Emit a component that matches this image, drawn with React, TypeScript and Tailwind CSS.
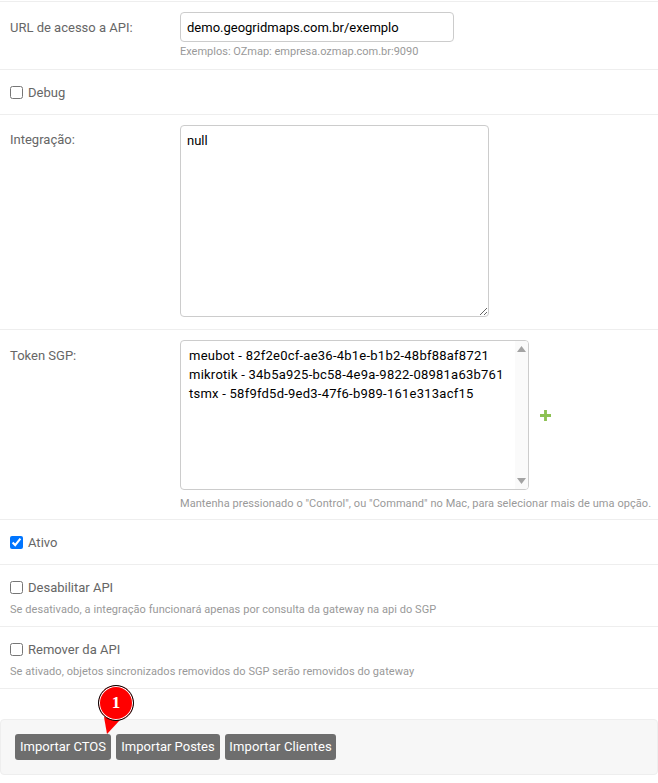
const tokens = [
  'meubot - 82f2e0cf-ae36-4b1e-b1b2-48bf88af8721',
  'mikrotik - 34b5a925-bc58-4e9a-9822-08981a63b761',
  'tsmx - 58f9fd5d-9ed3-47f6-b989-161e313acf15',
];

function CheckRow({
  label,
  help,
  checked,
  className,
}: {
  label: string;
  help?: string;
  checked?: boolean;
  className: string;
}) {
  return (
    <div className={`border-t border-[#eeeeee] px-2.5 ${className}`}>
      <label className="flex h-[18px] items-center gap-[5px] text-[13px] text-[#666666]">
        <input type="checkbox" defaultChecked={checked} className="m-0 h-[13px] w-[13px]" />
        <span className="pt-[2px]">{label}</span>
      </label>
      {help && <p className="mt-[6px] text-[11px] leading-[16px] tracking-[0.06px] text-[#999999]">{help}</p>}
    </div>
  );
}

function ImportButton({ children, className }: { children: string; className: string }) {
  return (
    <button className={`h-[26px] rounded-[3px] bg-[#6e6e6e] text-[13px] text-white ${className}`}>
      {children}
    </button>
  );
}

export default function App() {
  return (
    <div className="h-[783px] w-[658px] overflow-hidden bg-white pt-px font-['Roboto',sans-serif] text-[13px]">
      {/* URL */}
      <div className="flex h-[68px] border-t border-[#eeeeee] pt-[10px]">
        <label className="w-[180px] pl-2.5 pt-[8px] leading-[16px] text-[#666666]">URL de acesso a API:</label>
        <div>
          <input
            defaultValue="demo.geogridmaps.com.br/exemplo"
            className="h-[30px] w-[274px] rounded-[4px] border border-[#cccccc] px-[6px] text-[13px] text-black outline-none"
          />
          <p className="mt-[2px] text-[11px] leading-[16px] text-[#999999]">Exemplos: OZmap: empresa.ozmap.com.br:9090</p>
        </div>
      </div>

      <CheckRow label="Debug" className="h-[45px] pt-[13px]" />

      {/* Integracao */}
      <div className="flex h-[215px] border-t border-[#eeeeee] pt-[10px]">
        <label className="w-[180px] pl-2.5 pt-[7px] leading-[16px] text-[#666666]">Integração:</label>
        <textarea
          defaultValue="null"
          className="h-[192px] w-[309px] rounded-[4px] border border-[#cccccc] px-[6px] py-[6px] text-[13px] leading-[18px] text-black outline-none"
        />
      </div>

      {/* Token */}
      <div className="flex h-[190px] border-t border-[#eeeeee] pt-[10px]">
        <label className="w-[180px] pl-2.5 pt-[8px] leading-[16px] text-[#666666]">Token SGP:</label>
        <div>
          <div className="flex items-center">
            <div className="relative h-[150px] w-[349px] overflow-hidden rounded-[4px] border border-[#cccccc] pl-2 pt-[5px] text-[13px] leading-[19px] tracking-[0.24px] text-black">
              {tokens.map((token) => (
                <div key={token} className="whitespace-nowrap">
                  {token}
                </div>
              ))}
              <div className="absolute inset-y-0 right-0 flex w-[13px] flex-col items-center justify-between bg-[#fafafa] py-[5px]">
                <svg width="9" height="6" viewBox="0 0 9 6">
                  <path d="M4.5 0 9 6H0z" fill="#a3a3a3" />
                </svg>
                <svg width="9" height="6" viewBox="0 0 9 6">
                  <path d="M0 0h9L4.5 6z" fill="#a3a3a3" />
                </svg>
              </div>
            </div>
            <svg className="ml-[11px]" width="11" height="11" viewBox="0 0 10 10">
              <path d="M3.7 0h2.6v3.7H10v2.6H6.3V10H3.7V6.3H0V3.7h3.7z" fill="#8cc152" />
            </svg>
          </div>
          <p className="mt-[6px] whitespace-nowrap text-[11px] leading-[16px] tracking-[0.06px] text-[#999999]">
            Mantenha pressionado o "Control", ou "Command" no Mac, para selecionar mais de uma opção.
          </p>
        </div>
      </div>

      <CheckRow label="Ativo" checked className="h-[45px] pt-[13px]" />
      <CheckRow
        label="Desabilitar API"
        help="Se desativado, a integração funcionará apenas por consulta da gateway na api do SGP"
        className="h-[62px] pt-[13px]"
      />
      <CheckRow
        label="Remover da API"
        help="Se ativado, objetos sincronizados removidos do SGP serão removidos do gateway"
        className="h-[62px] pt-[13px]"
      />

      {/* Actions */}
      <div className="border-t border-[#eeeeee] pt-[30px]">
        <div className="relative flex h-[56px] items-center gap-[5px] rounded-[4px] border border-[#eeeeee] bg-[#f7f7f7] px-[14px]">
          <ImportButton className="w-[96px]">Importar CTOS</ImportButton>
          <ImportButton className="w-[104px]">Importar Postes</ImportButton>
          <ImportButton className="w-[111px] tracking-[0.15px]">Importar Clientes</ImportButton>

          {/* Step marker */}
          <svg className="absolute left-[102px] top-[-3px]" width="19" height="18" viewBox="0 0 19 18">
            <path d="M1 0 17 3 4 17z" fill="#ff0000" />
          </svg>
          <div className="absolute left-[97px] top-[-35px] flex h-[36px] w-[36px] items-center justify-center rounded-full border border-black bg-[#ff0000] font-['Liberation_Serif',serif] text-[17px] font-bold text-white shadow-[inset_0_0_0_1px_#ffffff]">
            1
          </div>
        </div>
      </div>
    </div>
  );
}
